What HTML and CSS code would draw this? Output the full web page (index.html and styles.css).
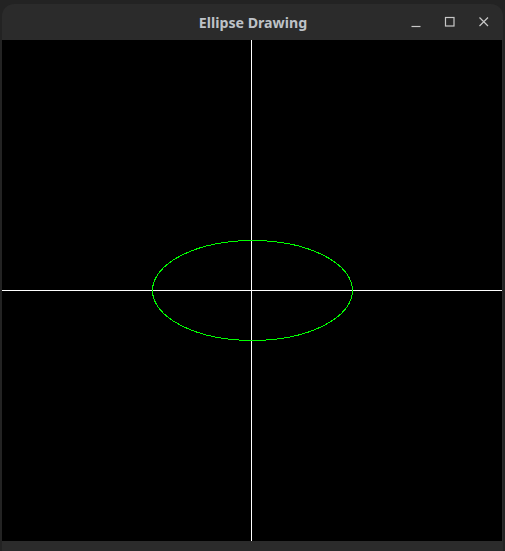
FILE: index.html
```html
<!DOCTYPE html>
<html>
<head>
<meta charset="utf-8">
<link rel="stylesheet" href="styles.css">
</head>
<body>
<div class="window">
  <div class="titlebar">
    <span class="title">Ellipse Drawing</span>
    <div class="controls">
      <svg class="btn" width="12" height="12" viewBox="0 0 12 12"><path d="M1.5 10.5h9" stroke="#c8c8c8" stroke-width="1.2" fill="none"/></svg>
      <svg class="btn" width="12" height="12" viewBox="0 0 12 12"><rect x="1.5" y="1.5" width="8.5" height="8.5" stroke="#c8c8c8" stroke-width="1.2" fill="none"/></svg>
      <svg class="btn" width="12" height="12" viewBox="0 0 12 12"><path d="M1.5 1.5l8.5 8.5M10 1.5l-8.5 8.5" stroke="#c8c8c8" stroke-width="1.2" fill="none"/></svg>
    </div>
  </div>
  <svg class="canvas" width="500" height="501" viewBox="0 0 500 501">
    <rect width="500" height="501" fill="#000"/>
    <line x1="249.5" y1="0" x2="249.5" y2="501" stroke="#fff" stroke-width="1"/>
    <line x1="0" y1="250.5" x2="500" y2="250.5" stroke="#fff" stroke-width="1"/>
    <ellipse cx="250.5" cy="250.5" rx="100" ry="50" fill="none" stroke="#00ff00" stroke-width="1" shape-rendering="crispEdges"/>
  </svg>
</div>
</body>
</html>
```
FILE: styles.css
```css
html, body {
  margin: 0;
  padding: 0;
  background: #232323;
  width: 505px;
  height: 551px;
  overflow: hidden;
}
.window {
  margin: 4px 0 0 2px;
  width: 501px;
  height: 547px;
  background: #2b2b2b;
  border-radius: 12px 12px 0 0;
}
.titlebar {
  position: relative;
  height: 36px;
  display: flex;
  align-items: center;
  justify-content: center;
}
.title {
  font-family: "Noto Sans", "DejaVu Sans", sans-serif;
  font-weight: bold;
  font-size: 14.2px;
  color: #bec2c7;
  margin-left: 1px;
  margin-top: 1px;
}
.controls {
  position: absolute;
  right: 13px;
  top: 12px;
  display: flex;
  gap: 22px;
}
.btn {
  display: block;
}
.canvas {
  display: block;
}
```
